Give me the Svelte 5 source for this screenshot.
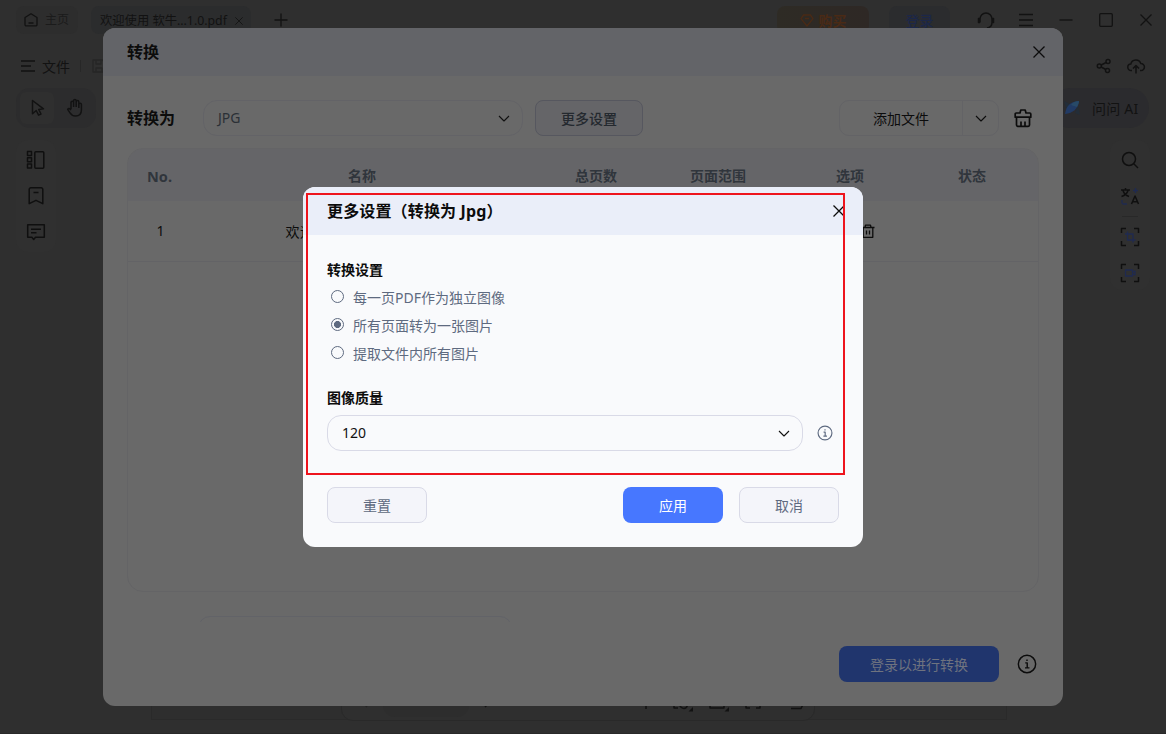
<!--
  App.svelte - PDF workspace with the convert dialog and its "more settings" dialog
-->

<script lang="ts">
  const columns = ['No.', '名称', '总页数', '页面范围', '选项', '状态'];

  const modes = [
    { key: 'single', label: '每一页PDF作为独立图像' },
    { key: 'merge', label: '所有页面转为一张图片' },
    { key: 'extract', label: '提取文件内所有图片' },
  ] as const;

  const fileName = '欢迎使用 软牛...1.0.pdf';

  let mode = $state<string>('merge');
  let quality = $state(120);

  function reset() {
    mode = 'merge';
    quality = 120;
  }
</script>

{#snippet cross(size: number)}
  <svg class="icon" width={size} height={size} viewBox="0 0 12 12"><path d="M.5 .5l11 11M11.5 .5l-11 11" /></svg>
{/snippet}

{#snippet chevron()}
  <svg class="icon chevron" width="12" height="8" viewBox="0 0 12 8"><path d="M1 2l5 5 5-5" /></svg>
{/snippet}

{#snippet info(size: number)}
  <svg class="icon info" width={size} height={size} viewBox="0 0 18 18">
    <circle cx="9" cy="9" r="7.8" />
    <path d="M7.4 8h1.8v4.5M7.2 12.5h4M9 4.9v1.4" />
  </svg>
{/snippet}

<div class="app">
  <header class="titlebar">
    <div class="chip home">
      <svg class="icon" width="16" height="16" viewBox="0 0 16 16"><path d="M2 5.5L8 1.7l6 3.8v7.2a1.2 1.2 0 0 1-1.2 1.2H3.2A1.2 1.2 0 0 1 2 12.700zM5.500 11h5" /></svg>
      <span>主页</span>
    </div>
    <div class="chip file">
      <span>{fileName}</span>
      {@render cross(8)}
    </div>
    <svg class="icon plus" width="14" height="14" viewBox="0 0 14 14"><path d="M7 .5v13M.5 7h13" /></svg>
    <div class="spacer"></div>
    <div class="chip buy">
      <svg class="icon" width="14" height="13" viewBox="0 0 14 13"><path d="M3.600 1h6.800L13 4.600 7 12 1 4.600zM5 4.500h4" /></svg>
      <b>购买</b>
    </div>
    <div class="chip login"><b>登录</b></div>
    <div class="window-buttons">
      <svg class="icon bold" width="20" height="18" viewBox="0 0 20 18">
        <path d="M4 11.500V8a6 6 0 0 1 12 0v3.500c0 3-2 5-5 5.500M4 7.500H2.500v4H4M16 7.500h1.500v4H16" />
      </svg>
      <svg class="icon" width="20" height="14" viewBox="0 0 20 14"><path d="M3 1.500h14M3 7h14M3 12.500h14" /></svg>
      <svg class="icon" width="20" height="14" viewBox="0 0 20 14"><path d="M3.500 7h13" /></svg>
      <svg class="icon" width="20" height="14" viewBox="0 0 20 14"><rect x="3.700" y=".7" width="12.600" height="12.600" rx="1" /></svg>
      <svg class="icon" width="20" height="14" viewBox="0 0 20 14"><path d="M4.500 1.500l11 11M15.500 1.500l-11 11" /></svg>
    </div>
  </header>

  <nav class="menubar">
    <svg class="icon bold" width="16" height="14" viewBox="0 0 16 14"><path d="M1 2h14M1 7h10M1 12h14" /></svg>
    <span>文件</span>
    <i></i>
    <svg class="icon save" width="14" height="14" viewBox="0 0 14 14"><path d="M1 1h9.500L13 3.500V13H1zM4 1v4h5V1M4 13V9h6v4" /></svg>
    <div class="spacer"></div>
    <svg class="icon bold" width="16" height="16" viewBox="0 0 16 16">
      <circle cx="3.300" cy="8" r="2" /><circle cx="12" cy="3.500" r="2" /><circle cx="11.500" cy="12.500" r="2" />
      <path d="M5.200 7l4.900-2.500M5.200 9l4.600 2.500" />
    </svg>
    <svg class="icon bold" width="18" height="16" viewBox="0 0 18 16"><path d="M5 12.500H4.200a3.200 3.200 0 0 1-.4-6.400A5.200 5.200 0 0 1 13.800 5.500a3.500 3.500 0 0 1 .2 7h-1M9 15.500V8M6 10.500l3-3 3 3" /></svg>
  </nav>

  <div class="tools">
    <div class="pointer-tools">
      <div class="tool selected">
        <svg class="icon bold" width="16" height="18" viewBox="0 0 16 18"><path d="M2.500 1.500v13.300l3.700-3.300 2.400 4.700 2.400-1.200-2.300-4.600 4.800-.6z" /></svg>
      </div>
      <div class="tool">
        <svg class="icon bold" width="18" height="20" viewBox="0 0 18 20"><path d="M5 11V4.500a1.300 1.300 0 0 1 2.600 0V9M7.600 9V2.800a1.300 1.300 0 0 1 2.600 0V9M10.200 9V3.800a1.300 1.300 0 0 1 2.600 0V10M12.800 10V6.500a1.300 1.300 0 0 1 2.600 0V12c0 3.800-2.400 6-5.800 6-2.600 0-4.200-1-5.600-3.200L1.700 11.400c.8-1.600 2-1.200 3.300.8" /></svg>
      </div>
    </div>
    <div class="ask">
      <svg width="18" height="18" viewBox="0 0 18 18">
        <path fill="#232d38" d="M1 2l6 3-3 7zM17 16l-5-2 3-7z" />
        <path fill="#213a64" d="M2 15C3 7 8 2 16 2c-1 8-6 12-14 13z" />
        <path fill="#284a68" d="M8 6c2-3 5-4 8-4 0 2-1 4-2 6z" />
      </svg>
      <span>问问 AI</span>
    </div>
  </div>

  <div class="workspace">
    <aside class="rail left">
      <svg class="icon bold" width="20" height="20" viewBox="0 0 20 20"><path d="M1.500 1.500h4v4h-4zM1.500 7.800h4v4h-4zM1.500 14h4v4h-4z" /><rect x="8.800" y="1.700" width="9" height="16.500" rx="1" /></svg>
      <svg class="icon bold" width="20" height="20" viewBox="0 0 20 20"><path d="M3.200 3.500a1.700 1.700 0 0 1 1.700-1.700h10.200a1.700 1.700 0 0 1 1.700 1.700v14.200L10 14.300l-6.800 3.400zM7.500 6.500h5" /></svg>
      <svg class="icon bold" width="20" height="20" viewBox="0 0 20 20"><path d="M1.700 2.700h16.600v12.600H9.500l-1.800 2.200-1.800-2.200H1.700zM5 7.300h10M5 10.700h5.500" /></svg>
    </aside>
    <main class="page"></main>
    <aside class="rail right">
      <svg class="icon bold" width="20" height="20" viewBox="0 0 20 20"><circle cx="9" cy="9" r="6.500" /><path d="M14 14l4 4" /></svg>
      <svg class="icon bold" width="20" height="20" viewBox="0 0 20 20">
        <path d="M1 4h9M5.500 2v2M8 4.500C7 8 4.500 9.500 1.500 10.500M3 4.500c1 3.500 3 5 6 6M11.500 18L15 10l3.500 8M12.500 15.800h5" />
        <path class="blue" d="M15.500 2v5M13 4.500h5M2 14v2.500A1.500 1.500 0 0 0 3.500 18H7" />
      </svg>
      <i></i>
      <svg class="icon bold" width="20" height="20" viewBox="0 0 20 20">
        <path d="M1.500 6V1.500H6M14 1.500h4.500V6M18.500 14v4.500H14M6 18.500H1.500V14" />
        <path class="blue" d="M7.500 4.500v8.500h8M5 7h8v8.500" />
      </svg>
      <svg class="icon bold" width="20" height="20" viewBox="0 0 20 20">
        <path d="M1.500 6V1.500H6M14 1.500h4.500V6M18.500 14v4.500H14M6 18.500H1.500V14" />
        <path class="blue" d="M5.500 7h7v6h-7zM12.500 9l2.500-1v4l-2.500-1" />
      </svg>
    </aside>
  </div>

  <!-- Page navigation, mostly behind the convert dialog -->
  <div class="pager">
    <svg class="icon prev" width="10" height="14" viewBox="0 0 10 14"><path d="M8 1L2 7l6 6" /></svg>
    <div class="page-no">1/5</div>
    <svg class="icon bold" width="10" height="14" viewBox="0 0 10 14"><path d="M2 1l6 6-6 6" /></svg>
    <div class="spacer"></div>
    <svg class="icon bold" width="16" height="16" viewBox="0 0 16 16"><path d="M8 1v14M1 8h14" /></svg>
    <svg class="icon bold" width="22" height="20" viewBox="0 0 22 20"><path d="M2 6V2h4M2 12v4h4M15 2h3v4M7.500 13c2 4.500 7 4.500 8 0" /><path class="solid" d="M21 15v4.500h-4.500z" /></svg>
    <svg class="icon bold" width="22" height="20" viewBox="0 0 22 20"><path d="M2 12v4h14v-4" /><path class="solid" d="M21 15v4.500h-4.500z" /></svg>
    <svg class="icon bold" width="18" height="18" viewBox="0 0 18 18"><path d="M2 6V2h4M2 11v4h4M12 15h4v-4" /></svg>
    <svg class="icon bold" width="18" height="18" viewBox="0 0 18 18"><path d="M3 15.500h10l1.500-3" /></svg>
  </div>
</div>

<section class="dialog convert">
  <header>
    <h2>转换</h2>
    {@render cross(12)}
  </header>

  <div class="options">
    <h2>转换为</h2>
    <div class="select format"><span>JPG</span>{@render chevron()}</div>
    <button class="btn more">更多设置</button>
    <div class="split">
      <span>添加文件</span>
      <div class="drop">{@render chevron()}</div>
    </div>
    <svg class="icon clear" width="20" height="20" viewBox="0 0 20 20"><path d="M2.200 9.200V6a1 1 0 0 1 1-1H7l.8-3h4.400l.8 3h3.800a1 1 0 0 1 1 1v3.200zM3.500 9.200V17a1.300 1.300 0 0 0 1.300 1.300h10.400a1.300 1.300 0 0 0 1.300-1.300V9.200M8 13.500v4.500M12 13.500v4.500" /></svg>
  </div>

  <div class="table">
    <div class="row head">
      {#each columns as column}
        <span>{column}</span>
      {/each}
    </div>
    <div class="row">
      <span>1</span>
      <span class="name">{fileName}</span>
      <span>5</span>
      <span>1-5</span>
      <span class="actions">
        <svg class="icon" width="14" height="14" viewBox="0 0 14 14"><path d="M.5 3.500h13M4 3.500l.5-2.300h5l.5 2.300M2.200 3.500v9.800h9.600V3.500M5.500 6.500v4M8.500 6.500v4" /></svg>
      </span>
      <span></span>
    </div>
  </div>

  <div class="output"><div></div></div>

  <footer>
    <button class="btn primary">登录以进行转换</button>
    {@render info(20)}
  </footer>
</section>

<section class="dialog settings">
  <header>
    <h2>更多设置（转换为 Jpg）</h2>
    {@render cross(12)}
  </header>

  <div class="content">
    <h3>转换设置</h3>
    {#each modes as item}
      <label class="radio">
        <input type="radio" name="mode" value={item.key} bind:group={mode} />
        <span>{item.label}</span>
      </label>
    {/each}

    <h3 class="quality-title">图像质量</h3>
    <div class="quality">
      <div class="select"><span>{quality}</span>{@render chevron()}</div>
      {@render info(16)}
    </div>
  </div>

  <footer>
    <button class="btn" onclick={reset}>重置</button>
    <div class="spacer"></div>
    <button class="btn primary">应用</button>
    <button class="btn">取消</button>
  </footer>
</section>

<div class="highlight" aria-hidden="true"></div>

<style>
  :global(body) {
    background: #2f2f2f;
    overflow: hidden;
    font-family: 'Noto Sans', 'Noto Sans CJK SC', sans-serif;
    font-size: 14px;
    line-height: 20px;
    color: #0c0c0c;
  }

  h2, h3 {
    margin: 0;
    font-size: 16px;
    font-weight: 700;
  }

  h3 {
    font-size: 14px;
  }

  .icon {
    display: block;
    flex: none;
    fill: none;
    stroke: currentColor;
    stroke-width: 1.3;
    stroke-linejoin: round;
    overflow: visible;
  }

  .bold {
    stroke-width: 1.5;
  }

  .chevron {
    stroke-width: 1.1;
  }

  .blue {
    stroke: #1f2a50;
    stroke-width: 1.3;
  }

  .solid {
    fill: currentColor;
    stroke: none;
  }

  .spacer {
    flex: 1;
  }

  /* Workspace behind the dialogs */
  .app {
    display: flex;
    flex-direction: column;
    height: 734px;
    box-sizing: border-box;
    border-bottom: 1px solid #292929;
    color: #121212;
  }

  .titlebar {
    display: flex;
    align-items: center;
    height: 40px;
    padding: 0 10px 0 16px;
  }

  .chip {
    display: flex;
    align-items: center;
    box-sizing: border-box;
    height: 28px;
    border-radius: 8px;
  }

  .home {
    width: 62px;
    padding-left: 7px;
    gap: 6px;
    font-size: 12px;
    background: #2d2d2d;
  }

  .home span {
    color: #1b1b1b;
  }

  .file {
    width: 160px;
    margin-left: 13px;
    padding: 2px 8px 0 9px;
    justify-content: space-between;
    font-size: 12.300px;
    white-space: nowrap;
    background: #2b2c2d;
  }

  .plus {
    margin-left: 23px;
  }

  .buy {
    justify-content: center;
    width: 92px;
    gap: 5px;
    padding-top: 1px;
    color: #4a2a15;
    background: linear-gradient(90deg, #2e2b25, #2e2825);
  }

  .login {
    justify-content: center;
    width: 61px;
    margin-left: 20px;
    padding-top: 2px;
    color: #1c2748;
    background: #2b2c2e;
  }

  .login b {
    font-weight: 500;
  }

  .window-buttons {
    display: flex;
    align-items: center;
    gap: 20px;
    margin-left: 26px;
  }

  .menubar {
    display: flex;
    align-items: center;
    height: 48px;
    margin-top: 2px;
    padding: 0 21px 0 20px;
    box-sizing: border-box;
    gap: 6px;
  }

  .menubar span {
    padding-top: 2px;
  }

  .menubar i {
    width: 1px;
    height: 12px;
    margin: 0 5px 0 4px;
    background: #272727;
  }

  .menubar .save {
    color: #262626;
  }

  .menubar > :last-child {
    margin-left: 9px;
  }

  .tools {
    display: flex;
    justify-content: space-between;
    height: 40px;
    margin-top: -2px;
    padding: 0 17px 0 16px;
  }

  .pointer-tools {
    display: flex;
    box-sizing: border-box;
    width: 80px;
    padding: 4px;
    border-radius: 14px;
    background: #2c2c2d;
  }

  .tool {
    display: flex;
    align-items: center;
    justify-content: center;
    width: 34px;
    height: 32px;
    border-radius: 6px;
  }

  .tool + .tool {
    margin-left: 4px;
  }

  .selected {
    box-sizing: border-box;
    padding-left: 2px;
    background: #2f2f2f;
  }

  .ask {
    display: flex;
    align-items: center;
    box-sizing: border-box;
    width: 99px;
    padding-left: 13px;
    gap: 11px;
    border-radius: 20px;
    white-space: nowrap;
    background: #2b2b2e;
  }

  .ask span {
    padding-top: 2px;
    letter-spacing: 0.2px;
  }

  .workspace {
    display: flex;
    flex: 1;
    padding: 12px 16px 0 16px;
  }

  .rail {
    display: flex;
    flex-direction: column;
    align-items: center;
    box-sizing: border-box;
    width: 40px;
    padding-top: 10px;
    gap: 16px;
    border-radius: 12px;
    color: #0f0f0f;
  }

  .left {
    height: 112px;
    background: #303030;
  }

  .right {
    height: 150px;
    background: #303030;
  }

  .right i {
    width: 16px;
    height: 1px;
    margin: -6px 0;
    background: #282828;
  }

  .page {
    box-sizing: border-box;
    width: 856px;
    height: 580px;
    margin: 0 auto 0 95px;
    border: 1px solid #2a2a2a;
    border-top: 0;
    background: #2e2e2e;
  }

  .pager {
    position: absolute;
    left: 341px;
    top: 680px;
    display: flex;
    align-items: center;
    box-sizing: border-box;
    width: 474px;
    height: 41px;
    padding: 0 8px 0 17px;
    gap: 14px;
    border: 1px solid #292929;
    border-radius: 12px;
    background: #2f2f2f;
  }

  .pager .spacer ~ svg {
    margin-top: 2px;
  }

  .pager .spacer + svg {
    margin-right: 4px;
  }

  .pager > :last-child {
    margin-left: 12px;
  }

  .prev {
    color: #232323;
  }

  .page-no {
    width: 86px;
    height: 32px;
    border-radius: 12px;
    line-height: 30px;
    text-align: center;
    background: #2d2d2d;
  }

  /* Shared dialog parts */
  .dialog {
    position: absolute;
    display: flex;
    flex-direction: column;
    border-radius: 12px;
    overflow: hidden;
  }

  .dialog > header {
    display: flex;
    align-items: center;
    justify-content: space-between;
    height: 48px;
    padding: 0 18px 0 24px;
  }

  .btn {
    box-sizing: border-box;
    width: 100px;
    height: 36px;
    padding: 1px 0 0;
    border: 1px solid #d9dae7;
    border-radius: 8px;
    font: inherit;
    color: #5e6a80;
    background: #f4f5fa;
  }

  .primary {
    border: 0;
    color: #fff;
    background: #4777ff;
  }

  .select {
    display: flex;
    align-items: center;
    justify-content: space-between;
    box-sizing: border-box;
    height: 36px;
    padding: 0 12px 0 14px;
    border: 1px solid #d9dae7;
    border-radius: 14px;
  }

  /* Convert dialog, dimmed by the settings dialog */
  .convert {
    left: 103px;
    top: 28px;
    width: 960px;
    height: 678px;
    background: #696969;
  }

  .convert > header {
    background: #636468;
  }

  .options {
    display: flex;
    align-items: center;
    height: 36px;
    margin: 24px 0 12px;
    padding: 0 30px 0 24px;
  }

  .format {
    width: 320px;
    margin-left: 28px;
    border-color: #636367;
    color: #2b3036;
  }

  .format :global(svg) {
    color: #111;
  }

  .more {
    width: 108px;
    margin-left: 12px;
    border-color: #56575f;
    color: #24292f;
    font-weight: 500;
    background: #656568;
  }

  .split {
    display: flex;
    align-items: center;
    box-sizing: border-box;
    width: 160px;
    height: 36px;
    margin: 0 14px 0 auto;
    border: 1px solid #636366;
    border-radius: 10px;
  }

  .split span {
    flex: 1;
    padding-top: 1px;
    text-align: center;
  }

  .drop {
    display: flex;
    align-items: center;
    justify-content: center;
    width: 35px;
    height: 34px;
    border-left: 1px solid #636366;
  }

  .clear {
    stroke-width: 1.7;
  }

  .table {
    height: 442px;
    margin: 0 24px;
    border: 1px solid #646466;
    border-radius: 16px;
    overflow: hidden;
  }

  .row {
    display: grid;
    grid-template-columns: 65px 338px 130px 114px 150px 94px;
    align-items: center;
    height: 60px;
    border-bottom: 1px solid #636366;
    text-align: center;
  }

  .head {
    height: 52px;
    border-bottom: 0;
    font-weight: 700;
    color: #30353c;
    background: #656568;
  }

  .head span {
    padding-top: 2px;
  }

  .head span:first-child {
    margin-left: -2px;
    font-size: 14.500px;
  }

  .name {
    padding-top: 1px;
    letter-spacing: 0.5px;
  }

  .actions {
    display: flex;
    justify-content: flex-end;
    padding-right: 50px;
  }

  .output {
    height: 6px;
    margin: 24px 0 0 95px;
    overflow: hidden;
  }

  .output div {
    width: 314px;
    height: 34px;
    box-sizing: border-box;
    border: 1px solid #626368;
    border-radius: 12px;
  }

  .convert > footer {
    display: flex;
    align-items: center;
    justify-content: flex-end;
    gap: 18px;
    margin-top: 24px;
    padding-right: 26px;
  }

  .convert .primary {
    width: 160px;
    color: #6f737f;
    background: #20356d;
  }

  /* Settings dialog */
  .settings {
    left: 303px;
    top: 187px;
    width: 560px;
    height: 360px;
    background: #f9fafc;
  }

  .settings > header {
    background: #eaeef9;
  }

  .settings h2 {
    letter-spacing: 0.15px;
  }

  .content {
    padding: 25px 24px 0;
  }

  .radio {
    display: flex;
    align-items: center;
    height: 28px;
    color: #5e6a80;
  }

  .radio span {
    margin-top: 1px;
  }

  .content h3 + .radio {
    margin-top: 3px;
  }

  .radio input {
    appearance: none;
    box-sizing: border-box;
    width: 13px;
    height: 13px;
    margin: 0 9px 1px 4px;
    border: 1px solid #5e6a80;
    border-radius: 50%;
  }

  .radio input:checked {
    background: radial-gradient(circle, #5e6a80 3.200px, transparent 3.800px);
  }

  .quality-title {
    margin: 21px 0 7px;
  }

  .quality {
    display: flex;
    align-items: center;
    gap: 14px;
    color: #5e6a80;
  }

  .quality .select {
    width: 476px;
    color: #111;
  }

  .settings > footer {
    display: flex;
    gap: 16px;
    margin-top: auto;
    padding: 0 24px 24px;
  }

  .highlight {
    position: absolute;
    left: 306px;
    top: 193px;
    box-sizing: border-box;
    width: 539px;
    height: 282px;
    border: 2px solid #ee141d;
    pointer-events: none;
  }
</style>
